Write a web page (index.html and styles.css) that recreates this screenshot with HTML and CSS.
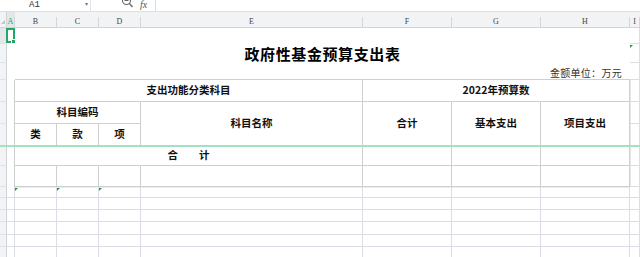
FILE: index.html
```html
<!DOCTYPE html>
<html lang="zh-CN">
<head>
<meta charset="utf-8">
<title>政府性基金预算支出表</title>
<link rel="stylesheet" href="styles.css">
</head>
<body>
<div class="app">
  <div class="topbar">
    <div class="namebox"><span class="ref">A1</span><span class="dd">&#9662;</span></div>
    <div class="fxbar">
      <svg class="zoomicon" width="14" height="11" viewBox="0 0 14 11" aria-hidden="true">
        <circle cx="5.5" cy="2.5" r="4" fill="none" stroke="#666" stroke-width="1.1"/>
        <line x1="3.5" y1="2.5" x2="7.5" y2="2.5" stroke="#666" stroke-width="1"/>
        <line x1="8.4" y1="5.5" x2="11.5" y2="9" stroke="#666" stroke-width="1.3"/>
      </svg>
      <span class="fx">fx</span>
    </div>
    <div class="formula"></div>
  </div>

  <div class="sheet">
    <!-- column headers -->
    <div class="ch corner"><i class="tri"></i></div>
    <div class="ch sel"><span>A</span></div>
    <div class="ch"><span>B</span></div>
    <div class="ch"><span>C</span></div>
    <div class="ch"><span>D</span></div>
    <div class="ch"><span>E</span></div>
    <div class="ch"><span>F</span></div>
    <div class="ch"><span>G</span></div>
    <div class="ch"><span>H</span></div>
    <div class="ch"><span>I</span></div>

    <!-- row 1 -->
    <div class="rh sel"></div>
    <div class="cell n sa"><i class="selbox"></i></div>
    <div class="cell n s7"></div>
    <div class="cell g"></div>

    <!-- row 2 -->
    <div class="rh"></div>
    <div class="cell n"></div>
    <div class="cell n s7 title">政府性基金预算支出表</div>
    <div class="cell g mark"></div>

    <!-- row 3 -->
    <div class="rh"></div>
    <div class="cell n"></div>
    <div class="cell s7 unit">金额单位：万元</div>
    <div class="cell g"></div>

    <!-- row 4 -->
    <div class="rh"></div>
    <div class="cell edge"></div>
    <div class="cell t s4">支出功能分类科目</div>
    <div class="cell t s3">2022年预算数</div>
    <div class="cell g sh"></div>

    <!-- row 5 -->
    <div class="rh"></div>
    <div class="cell edge"></div>
    <div class="cell t s3">科目编码</div>
    <div class="cell t r2">科目名称</div>
    <div class="cell t r2">合计</div>
    <div class="cell t r2">基本支出</div>
    <div class="cell t r2">项目支出</div>
    <div class="cell g sh"></div>

    <!-- row 6 -->
    <div class="rh"></div>
    <div class="cell edge"></div>
    <div class="cell t">类</div>
    <div class="cell t">款</div>
    <div class="cell t">项</div>
    <div class="cell g sh"></div>

    <!-- row 7 -->
    <div class="rh"></div>
    <div class="cell edge"></div>
    <div class="cell t s4">合　　计</div>
    <div class="cell t"></div>
    <div class="cell t"></div>
    <div class="cell t"></div>
    <div class="cell g sh"></div>

    <!-- row 8 -->
    <div class="rh"></div>
    <div class="cell edge"></div>
    <div class="cell t"></div>
    <div class="cell t"></div>
    <div class="cell t"></div>
    <div class="cell t"></div>
    <div class="cell t"></div>
    <div class="cell t"></div>
    <div class="cell t"></div>
    <div class="cell g sh"></div>

    <!-- row 9 -->
    <div class="rh"></div>
    <div class="cell g"></div>
    <div class="cell g top mark"></div>
    <div class="cell g top mark"></div>
    <div class="cell g top mark"></div>
    <div class="cell g top"></div>
    <div class="cell g top"></div>
    <div class="cell g top"></div>
    <div class="cell g top"></div>
    <div class="cell g"></div>

    <!-- rows 10-14 -->
    <div class="rh"></div><div class="cell g"></div><div class="cell g"></div><div class="cell g"></div><div class="cell g"></div><div class="cell g"></div><div class="cell g"></div><div class="cell g"></div><div class="cell g"></div><div class="cell g"></div>
    <div class="rh"></div><div class="cell g"></div><div class="cell g"></div><div class="cell g"></div><div class="cell g"></div><div class="cell g"></div><div class="cell g"></div><div class="cell g"></div><div class="cell g"></div><div class="cell g"></div>
    <div class="rh"></div><div class="cell g"></div><div class="cell g"></div><div class="cell g"></div><div class="cell g"></div><div class="cell g"></div><div class="cell g"></div><div class="cell g"></div><div class="cell g"></div><div class="cell g"></div>
    <div class="rh"></div><div class="cell g"></div><div class="cell g"></div><div class="cell g"></div><div class="cell g"></div><div class="cell g"></div><div class="cell g"></div><div class="cell g"></div><div class="cell g"></div><div class="cell g"></div>
    <div class="rh"></div><div class="cell g"></div><div class="cell g"></div><div class="cell g"></div><div class="cell g"></div><div class="cell g"></div><div class="cell g"></div><div class="cell g"></div><div class="cell g"></div><div class="cell g"></div>
  </div>

  <div class="freeze"></div>
</div>
</body>
</html>
```

FILE: styles.css
```css
:root {
  --grid: #dadde6;
  --tb: #cfcfcf;
  --hdr: #f2f3f5;
  --hdrline: #d3d6dd;
  --green: #22a866;
}

html, body {
  margin: 0;
  padding: 0;
  background: #fff;
  overflow: hidden;
}

body {
  font-family: "Noto Sans CJK SC", "Noto Sans", sans-serif;
  color: #111;
}

.app {
  position: relative;
  width: 640px;
  height: 257px;
  overflow: hidden;
}

/* ---------- formula bar ---------- */
.topbar {
  display: flex;
  height: 12px;
  box-sizing: border-box;
  border-bottom: 1px solid #dcdfe5;
  background: #fff;
}

.namebox {
  position: relative;
  width: 91px;
  box-sizing: border-box;
  border-right: 1px solid #e1e4e9;
  display: flex;
  align-items: flex-start;
}

.ref {
  margin-left: 29px;
  margin-top: 1px;
  font-family: "Liberation Mono", "DejaVu Sans Mono", monospace;
  font-size: 9px;
  line-height: 9px;
  color: #333;
}

.dd {
  position: absolute;
  left: 85px;
  top: 0;
  font-size: 6px;
  line-height: 8px;
  color: #777;
}

.fxbar {
  width: 64px;
  display: flex;
  align-items: flex-start;
  background: #fff;
}

.zoomicon {
  margin-left: 30px;
  margin-top: -2px;
}

.fx {
  margin-left: 5px;
  font-family: "Liberation Serif", "DejaVu Serif", serif;
  font-style: italic;
  font-size: 10px;
  line-height: 10px;
  color: #555;
}

.formula {
  flex: 1;
  border-left: 1px solid #dcdfe5;
}

/* ---------- sheet grid ---------- */
.sheet {
  display: grid;
  grid-template-columns: 7px 8px 42px 42px 42px 222px 89px 89px 89px 10px;
  grid-template-rows: 16px 16px 19px 17px 22px 22px 22px 20px 21px 11px 12px 12px 13px 12px 12px;
}

.ch {
  background: var(--hdr);
  border-bottom: 1px solid #cfd3da;
  display: flex;
  align-items: flex-end;
}

.ch span {
  display: block;
  width: 100%;
  height: 10px;
  box-sizing: border-box;
  border-right: 1px solid var(--hdrline);
  text-align: center;
  font-family: "Liberation Serif", "DejaVu Serif", serif;
  font-size: 8px;
  line-height: 10px;
  color: #444;
}

.ch.sel {
  background: #e4e7ea;
}

.ch.sel span {
  color: var(--green);
}

.corner {
  position: relative;
  border-right: 1px solid #cfd3da;
  box-sizing: border-box;
}

.tri {
  position: absolute;
  left: 1px;
  top: 8px;
  width: 0;
  height: 0;
  border-left: 4px solid transparent;
  border-bottom: 4px solid #bfc3ca;
}

.rh {
  background: var(--hdr);
  border-right: 1px solid #cfd3da;
  border-bottom: 1px solid #dfe2e8;
}

.rh.sel {
  background: #e4e7ea;
}

.cell {
  box-sizing: border-box;
  display: flex;
  align-items: center;
  justify-content: center;
  font-size: 10.5px;
  font-weight: 700;
  line-height: 1;
  white-space: nowrap;
  position: relative;
}

.s3 { grid-column: span 3; }
.s4 { grid-column: span 4; }
.s7 { grid-column: span 7; }
.r2 { grid-row: span 2; }

.g {
  border-right: 1px solid var(--grid);
  border-bottom: 1px solid var(--grid);
}

.t {
  border-right: 1px solid var(--tb);
  border-bottom: 1px solid var(--tb);
}

.edge {
  border-right: 1px solid var(--tb);
}

.sh {
  box-shadow: inset 1px 0 0 #e9e9e9;
}

.top {
  box-shadow: inset 0 1px 0 #ececec;
}

.title {
  font-size: 15px;
  letter-spacing: 0.6px;
  color: #000;
}

.unit {
  justify-content: flex-end;
  padding-right: 8px;
  padding-top: 3px;
  border-bottom: 1px solid var(--tb);
  font-size: 10px;
  font-weight: 400;
  letter-spacing: 0.3px;
  color: #333;
}

/* selection box in A1 */
.selbox {
  position: absolute;
  left: -1px;
  top: 0;
  width: 9px;
  height: 15px;
  box-sizing: border-box;
  border: 2px solid var(--green);
}

.selbox::after {
  content: "";
  position: absolute;
  right: -3px;
  bottom: -3px;
  width: 3px;
  height: 3px;
  background: var(--green);
  border: 1px solid #fff;
}

/* green error markers */
.mark::before {
  content: "";
  position: absolute;
  left: 0;
  top: 1px;
  width: 0;
  height: 0;
  border-top: 3px solid #1f9a3a;
  border-right: 3px solid transparent;
}

/* frozen pane line */
.freeze {
  position: absolute;
  left: 0;
  right: 0;
  top: 145px;
  height: 2px;
  background: #a3e0c4;
}
```
